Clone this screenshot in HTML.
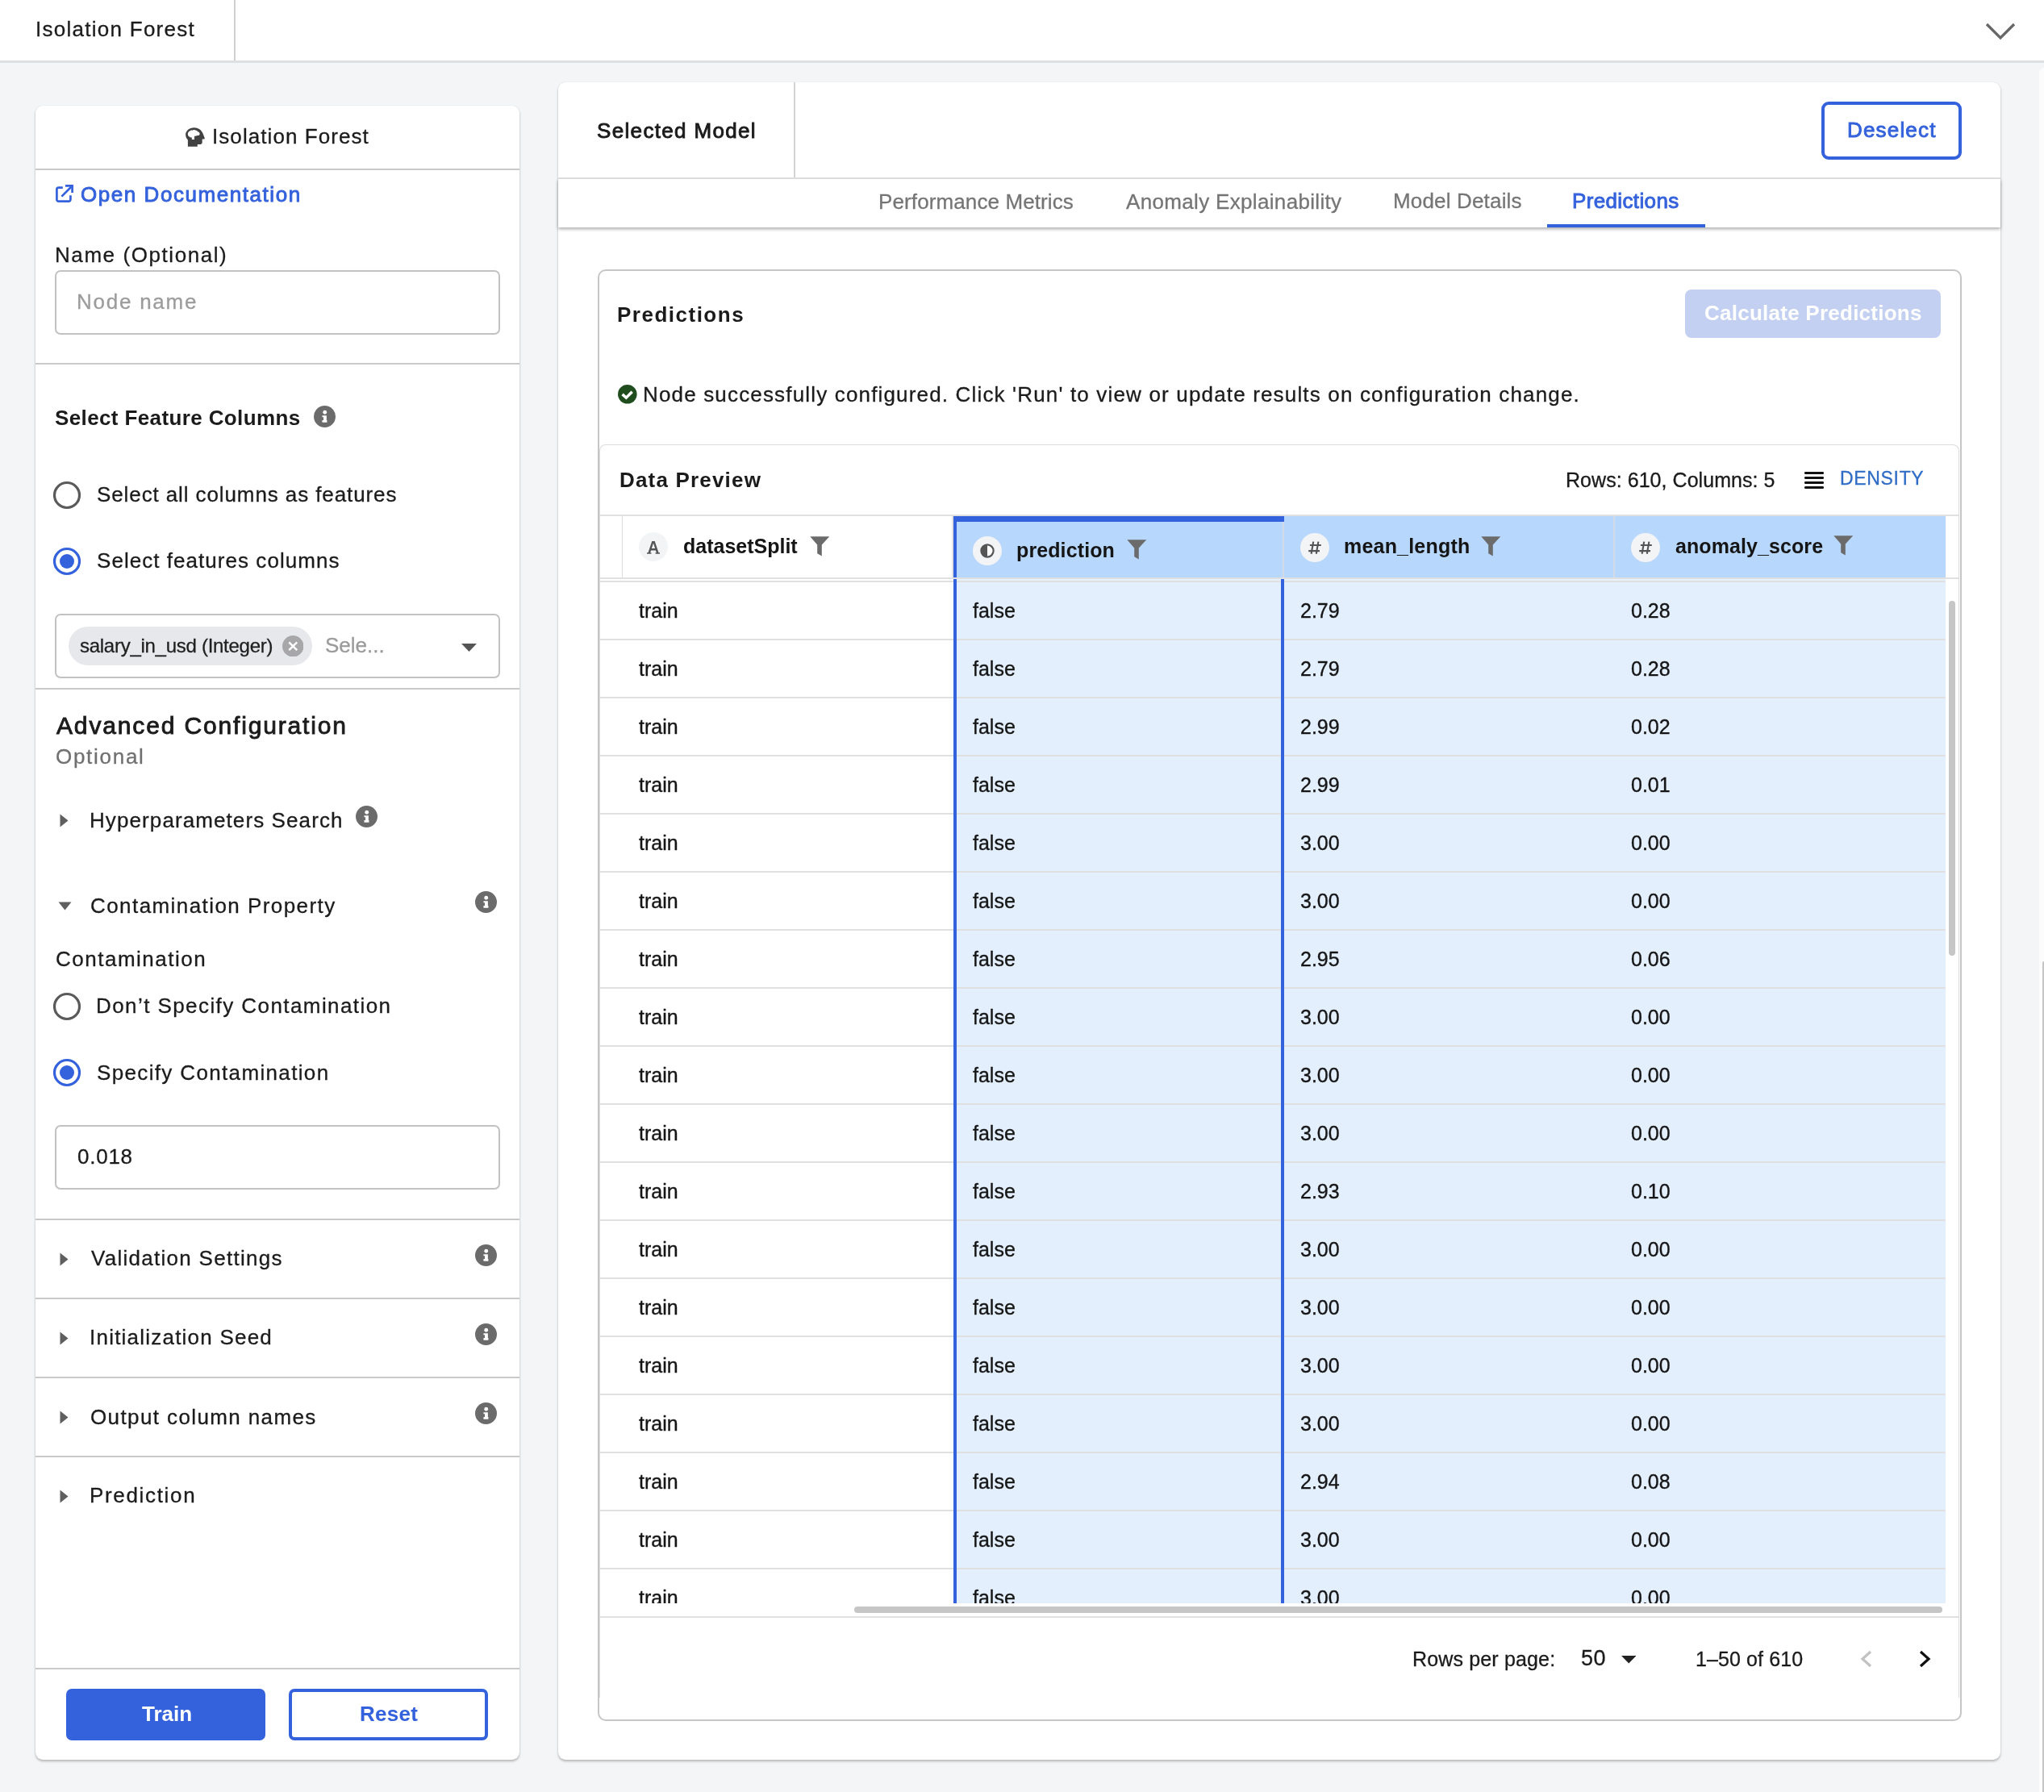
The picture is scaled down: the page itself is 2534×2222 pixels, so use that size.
<!DOCTYPE html>
<html><head><meta charset="utf-8"><title>Isolation Forest</title>
<style>
html,body{margin:0;padding:0;width:2534px;height:2222px;overflow:hidden;background:#f4f5f7}
body{position:relative;font-family:'Liberation Sans', sans-serif}
body div, body svg{position:absolute;box-sizing:border-box}
.t,.tb{white-space:pre;will-change:transform}
</style></head><body>
<div style="left:0px;top:0px;width:2534px;height:2222px;background:#f4f5f7"></div>
<div style="left:0px;top:0px;width:2534px;height:75px;background:#ffffff"></div>
<div style="left:0px;top:75px;width:2534px;height:3px;background:#dedfe1"></div>
<div style="left:290px;top:0px;width:2px;height:75px;background:#d0d0d0"></div>
<div class="t" id="top_title" style="left:43.84px;top:23.39px;font-size:26px;line-height:26px;font-weight:400;color:#1b1b1b;letter-spacing:1.267px;-webkit-text-stroke:0.3px currentColor;">Isolation Forest</div>
<svg style="left:2460px;top:26px;" width="40" height="26" viewBox="0 0 40 26"><polyline points="3,4 20,21 37,4" fill="none" stroke="#666" stroke-width="3.2"/></svg>
<div style="left:2528px;top:84px;width:6px;height:2138px;background:#fcfcfd;border-radius:8px 0 0 0"></div>
<div style="left:2532px;top:1192px;width:2px;height:1030px;background:#c4c4c4;border-radius:2px 0 0 0"></div>
<div style="left:44px;top:131px;width:600px;height:2051px;background:#fff;border-radius:9px;box-shadow:0 2px 3px rgba(0,0,0,0.26), 0 0 1px rgba(0,0,0,0.13)"></div>
<svg style="left:230px;top:158px;" width="24" height="24" viewBox="0 0 24 24"><path fill="#424242" fill-rule="evenodd" d="M10.6,0.2 C15.6,0.2 20,3.2 21.5,7.6 L23.7,12.9 C23.9,13.7 23.5,14.4 22.7,14.4 L20.7,14.4 L20.7,18.5 C20.7,19.8 19.7,20.9 18.4,20.9 L14.8,20.9 L14.8,23.8 L2.9,23.8 L2.9,15.5 C1.1,13.8 0.1,11.5 0.1,9.1 C0.1,4.1 4.8,0.2 10.6,0.2 Z M2.8,8.2 C2.8,6.5 3.8,5.2 5.3,4.6 C6,3.6 7.3,3.3 8.4,3.7 C9.3,3.0 11.0,2.9 12.0,3.5 C13.3,3.3 14.6,4.2 15.1,5.3 C16.6,5.5 17.8,6.8 17.6,8.2 C17.5,9.3 16.6,10.1 15.4,10.1 L14.3,10.1 C13.7,10.5 13.0,10.7 12.3,10.7 L11.0,10.8 L11.0,15.0 L7.8,15.0 L7.8,12.6 C6.5,12.6 5.2,12.0 4.4,11.2 C3.4,10.6 2.8,9.5 2.8,8.2 Z"/></svg>
<div class="t" id="card_title" style="left:262.94px;top:155.99px;font-size:26px;line-height:26px;font-weight:400;color:#1b1b1b;letter-spacing:1.067px;-webkit-text-stroke:0.3px currentColor;">Isolation Forest</div>
<div style="left:44px;top:209px;width:600px;height:2px;background:#c9c9c9"></div>
<svg style="left:68px;top:228px;" width="24" height="24" viewBox="0 0 24 24"><path d="M9.8,4.6 H4.6 A2.2,2.2 0 0 0 2.4,6.8 V19.4 A2.2,2.2 0 0 0 4.6,21.6 H17.2 A2.2,2.2 0 0 0 19.4,19.4 V14.2" fill="none" stroke="#3462dc" stroke-width="2.7"/><path d="M8.4,15.6 L20.2,3.8" stroke="#3462dc" stroke-width="2.7"/><path d="M13,2.4 H21.6 V11" fill="none" stroke="#3462dc" stroke-width="2.7"/></svg>
<div class="t" id="opendoc" style="left:99.74px;top:227.99px;font-size:26px;line-height:26px;font-weight:400;color:#3462dc;letter-spacing:1.553px;-webkit-text-stroke:0.9px currentColor;">Open Documentation</div>
<div class="t" id="name_lbl" style="left:68.44px;top:302.99px;font-size:26px;line-height:26px;font-weight:400;color:#1b1b1b;letter-spacing:1.571px;-webkit-text-stroke:0.3px currentColor;">Name (Optional)</div>
<div style="left:68px;top:335px;width:552px;height:80px;border:2px solid #c2c2c2;border-radius:7px;box-sizing:border-box;background:#fff"></div>
<div class="t" id="node_ph" style="left:95.34px;top:361.39px;font-size:26px;line-height:26px;font-weight:400;color:#9c9c9c;letter-spacing:1.750px;-webkit-text-stroke:0.3px currentColor;">Node name</div>
<div style="left:44px;top:450px;width:600px;height:2px;background:#c9c9c9"></div>
<div class="t" id="sfc" style="left:68.24px;top:504.99px;font-size:26px;line-height:26px;font-weight:700;color:#1b1b1b;letter-spacing:0.381px;">Select Feature Columns</div>
<svg style="left:388.7px;top:502.79999999999995px;" width="27" height="27" viewBox="0 0 24 24"><circle cx="12" cy="12" r="12" fill="#6b6b6b"/><circle cx="12.2" cy="7.3" r="2.15" fill="#fff"/><path d="M9.3,10.8 H14.1 V16.1 H14.6 V18.5 H9.3 V16.1 H10.7 V12.7 H9.3 Z" fill="#fff"/></svg>
<svg style="left:65.1px;top:595.8px;" width="36" height="36" viewBox="0 0 36 36"><circle cx="18" cy="18" r="15.5" fill="#fff" stroke="#5a5a5a" stroke-width="3.2"/></svg>
<div class="t" id="r1" style="left:120.44px;top:600.29px;font-size:26px;line-height:26px;font-weight:400;color:#1b1b1b;letter-spacing:0.897px;-webkit-text-stroke:0.3px currentColor;">Select all columns as features</div>
<svg style="left:65.1px;top:677.6px;" width="36" height="36" viewBox="0 0 36 36"><circle cx="18" cy="18" r="15.5" fill="#fff" stroke="#3462dc" stroke-width="3.2"/><circle cx="18" cy="18" r="9" fill="#3462dc"/></svg>
<div class="t" id="r2" style="left:120.44px;top:682.29px;font-size:26px;line-height:26px;font-weight:400;color:#1b1b1b;letter-spacing:1.045px;-webkit-text-stroke:0.3px currentColor;">Select features columns</div>
<div style="left:68px;top:761px;width:552px;height:80px;border:2px solid #c2c2c2;border-radius:7px;box-sizing:border-box;background:#fff"></div>
<div style="left:84.6px;top:777.3px;width:302.20000000000005px;height:47.30000000000007px;background:#e7e8eb;border-radius:24px"></div>
<div class="t" id="chip" style="left:98.56px;top:788.98px;font-size:24px;line-height:24px;font-weight:400;color:#1f1f1f;letter-spacing:-0.273px;-webkit-text-stroke:0.3px currentColor;">salary_in_usd (Integer)</div>
<svg style="left:349.8px;top:787.8px;" width="26.5" height="26.5" viewBox="0 0 26.5 26.5"><circle cx="13.25" cy="13.25" r="13.25" fill="#a7a7a9"/><path d="M8.3,8.3 L18.2,18.2 M18.2,8.3 L8.3,18.2" stroke="#fff" stroke-width="2.4"/></svg>
<div class="t" id="sele" style="left:403.44px;top:786.99px;font-size:26px;line-height:26px;font-weight:400;color:#9b9b9b;letter-spacing:0.000px;-webkit-text-stroke:0.3px currentColor;">Sele...</div>
<svg style="left:571.5px;top:797.5px;" width="19" height="10" viewBox="0 0 19 10"><path d="M0,0 H19 L9.5,10 Z" fill="#555"/></svg>
<div style="left:44px;top:853px;width:600px;height:2px;background:#c9c9c9"></div>
<div class="t" id="advcfg" style="left:69.80px;top:884.71px;font-size:30px;line-height:30px;font-weight:400;color:#1b1b1b;letter-spacing:1.848px;-webkit-text-stroke:0.9px currentColor;">Advanced Configuration</div>
<div class="t" id="optional" style="left:68.84px;top:924.79px;font-size:26px;line-height:26px;font-weight:400;color:#707070;letter-spacing:1.714px;-webkit-text-stroke:0.3px currentColor;">Optional</div>
<svg style="left:74px;top:1008.5px;" width="11" height="17" viewBox="0 0 11 17"><path d="M0.5,0.5 L10.5,8.5 L0.5,16.5 Z" fill="#5f5f5f"/></svg>
<div class="t" id="hyp" style="left:111.44px;top:1003.59px;font-size:26px;line-height:26px;font-weight:400;color:#1b1b1b;letter-spacing:1.095px;-webkit-text-stroke:0.3px currentColor;">Hyperparameters Search</div>
<svg style="left:441.2px;top:999.0px;" width="27" height="27" viewBox="0 0 24 24"><circle cx="12" cy="12" r="12" fill="#6b6b6b"/><circle cx="12.2" cy="7.3" r="2.15" fill="#fff"/><path d="M9.3,10.8 H14.1 V16.1 H14.6 V18.5 H9.3 V16.1 H10.7 V12.7 H9.3 Z" fill="#fff"/></svg>
<svg style="left:71.5px;top:1118px;" width="17" height="11" viewBox="0 0 17 11"><path d="M0.5,0.5 H16.5 L8.5,10.5 Z" fill="#5f5f5f"/></svg>
<div class="t" id="cprop" style="left:112.44px;top:1109.99px;font-size:26px;line-height:26px;font-weight:400;color:#1b1b1b;letter-spacing:1.429px;-webkit-text-stroke:0.3px currentColor;">Contamination Property</div>
<svg style="left:588.5px;top:1105.0px;" width="27" height="27" viewBox="0 0 24 24"><circle cx="12" cy="12" r="12" fill="#6b6b6b"/><circle cx="12.2" cy="7.3" r="2.15" fill="#fff"/><path d="M9.3,10.8 H14.1 V16.1 H14.6 V18.5 H9.3 V16.1 H10.7 V12.7 H9.3 Z" fill="#fff"/></svg>
<div class="t" id="contam" style="left:68.84px;top:1176.29px;font-size:26px;line-height:26px;font-weight:400;color:#1b1b1b;letter-spacing:1.500px;-webkit-text-stroke:0.3px currentColor;">Contamination</div>
<svg style="left:65.1px;top:1230.3px;" width="36" height="36" viewBox="0 0 36 36"><circle cx="18" cy="18" r="15.5" fill="#fff" stroke="#5a5a5a" stroke-width="3.2"/></svg>
<div class="t" id="dsc" style="left:119.44px;top:1233.79px;font-size:26px;line-height:26px;font-weight:400;color:#1b1b1b;letter-spacing:1.423px;-webkit-text-stroke:0.3px currentColor;">Don’t Specify Contamination</div>
<svg style="left:65.1px;top:1312px;" width="36" height="36" viewBox="0 0 36 36"><circle cx="18" cy="18" r="15.5" fill="#fff" stroke="#3462dc" stroke-width="3.2"/><circle cx="18" cy="18" r="9" fill="#3462dc"/></svg>
<div class="t" id="sc" style="left:120.44px;top:1316.69px;font-size:26px;line-height:26px;font-weight:400;color:#1b1b1b;letter-spacing:1.350px;-webkit-text-stroke:0.3px currentColor;">Specify Contamination</div>
<div style="left:68px;top:1395px;width:552px;height:80px;border:2px solid #c2c2c2;border-radius:7px;box-sizing:border-box;background:#fff"></div>
<div class="t" id="val018" style="left:96.34px;top:1420.99px;font-size:26px;line-height:26px;font-weight:400;color:#1b1b1b;letter-spacing:0.750px;-webkit-text-stroke:0.3px currentColor;">0.018</div>
<div style="left:44px;top:1511px;width:600px;height:2px;background:#c9c9c9"></div>
<svg style="left:74px;top:1552.5px;" width="11" height="17" viewBox="0 0 11 17"><path d="M0.5,0.5 L10.5,8.5 L0.5,16.5 Z" fill="#5f5f5f"/></svg>
<div class="t" id="vs" style="left:113.44px;top:1546.99px;font-size:26px;line-height:26px;font-weight:400;color:#1b1b1b;letter-spacing:1.278px;-webkit-text-stroke:0.3px currentColor;">Validation Settings</div>
<svg style="left:588.5px;top:1542.9px;" width="27" height="27" viewBox="0 0 24 24"><circle cx="12" cy="12" r="12" fill="#6b6b6b"/><circle cx="12.2" cy="7.3" r="2.15" fill="#fff"/><path d="M9.3,10.8 H14.1 V16.1 H14.6 V18.5 H9.3 V16.1 H10.7 V12.7 H9.3 Z" fill="#fff"/></svg>
<svg style="left:74px;top:1650.5px;" width="11" height="17" viewBox="0 0 11 17"><path d="M0.5,0.5 L10.5,8.5 L0.5,16.5 Z" fill="#5f5f5f"/></svg>
<div class="t" id="is" style="left:111.44px;top:1644.99px;font-size:26px;line-height:26px;font-weight:400;color:#1b1b1b;letter-spacing:1.222px;-webkit-text-stroke:0.3px currentColor;">Initialization Seed</div>
<svg style="left:588.5px;top:1641.0px;" width="27" height="27" viewBox="0 0 24 24"><circle cx="12" cy="12" r="12" fill="#6b6b6b"/><circle cx="12.2" cy="7.3" r="2.15" fill="#fff"/><path d="M9.3,10.8 H14.1 V16.1 H14.6 V18.5 H9.3 V16.1 H10.7 V12.7 H9.3 Z" fill="#fff"/></svg>
<svg style="left:74px;top:1749px;" width="11" height="17" viewBox="0 0 11 17"><path d="M0.5,0.5 L10.5,8.5 L0.5,16.5 Z" fill="#5f5f5f"/></svg>
<div class="t" id="ocn" style="left:112.44px;top:1743.59px;font-size:26px;line-height:26px;font-weight:400;color:#1b1b1b;letter-spacing:1.389px;-webkit-text-stroke:0.3px currentColor;">Output column names</div>
<svg style="left:588.5px;top:1739.0px;" width="27" height="27" viewBox="0 0 24 24"><circle cx="12" cy="12" r="12" fill="#6b6b6b"/><circle cx="12.2" cy="7.3" r="2.15" fill="#fff"/><path d="M9.3,10.8 H14.1 V16.1 H14.6 V18.5 H9.3 V16.1 H10.7 V12.7 H9.3 Z" fill="#fff"/></svg>
<div style="left:44px;top:1609px;width:600px;height:2px;background:#c9c9c9"></div>
<div style="left:44px;top:1707px;width:600px;height:2px;background:#c9c9c9"></div>
<div style="left:44px;top:1805px;width:600px;height:2px;background:#c9c9c9"></div>
<svg style="left:74px;top:1847px;" width="11" height="17" viewBox="0 0 11 17"><path d="M0.5,0.5 L10.5,8.5 L0.5,16.5 Z" fill="#5f5f5f"/></svg>
<div class="t" id="pred" style="left:111.44px;top:1841.39px;font-size:26px;line-height:26px;font-weight:400;color:#1b1b1b;letter-spacing:1.667px;-webkit-text-stroke:0.3px currentColor;">Prediction</div>
<div style="left:44px;top:2068px;width:600px;height:2px;background:#c9c9c9"></div>
<div style="left:82.3px;top:2094.3px;width:247.09999999999997px;height:63.69999999999982px;background:#3462dc;border-radius:7px"></div>
<div class="t" id="train" style="left:176.44px;top:2111.69px;font-size:26px;line-height:26px;font-weight:700;color:#ffffff;letter-spacing:0.000px;">Train</div>
<div style="left:358.4px;top:2094.3px;width:247.0px;height:63.69999999999982px;border:4px solid #3462dc;border-radius:7px;box-sizing:border-box;background:#fff"></div>
<div class="t" id="reset" style="left:445.64px;top:2111.69px;font-size:26px;line-height:26px;font-weight:700;color:#3462dc;letter-spacing:0.250px;">Reset</div>
<div style="left:692px;top:102px;width:1788px;height:2080px;background:#fff;border-radius:9px;box-shadow:0 2px 3px rgba(0,0,0,0.26), 0 0 1px rgba(0,0,0,0.13)"></div>
<div class="t" id="selmodel" style="left:739.74px;top:148.69px;font-size:26px;line-height:26px;font-weight:400;color:#1b1b1b;letter-spacing:1.338px;-webkit-text-stroke:0.9px currentColor;">Selected Model</div>
<div style="left:984px;top:102px;width:2px;height:119px;background:#d4d4d4"></div>
<div style="left:692px;top:220px;width:1788px;height:2px;background:#e3e3e3"></div>
<div style="left:2258px;top:126px;width:174px;height:72px;border:4px solid #3462dc;border-radius:9px;box-sizing:border-box"></div>
<div class="t" id="deselect" style="left:2289.84px;top:147.79px;font-size:26px;line-height:26px;font-weight:400;color:#3462dc;letter-spacing:1.171px;-webkit-text-stroke:0.9px currentColor;">Deselect</div>
<div style="left:692px;top:222px;width:1788px;height:60px;background:#fff;box-shadow:0 2px 4px rgba(0,0,0,0.34)"></div>
<div class="t" id="tab1" style="left:1089.24px;top:236.69px;font-size:26px;line-height:26px;font-weight:400;color:#757575;letter-spacing:0.111px;-webkit-text-stroke:0.3px currentColor;">Performance Metrics</div>
<div class="t" id="tab2" style="left:1396.04px;top:236.69px;font-size:26px;line-height:26px;font-weight:400;color:#757575;letter-spacing:0.333px;-webkit-text-stroke:0.3px currentColor;">Anomaly Explainability</div>
<div class="t" id="tab3" style="left:1727.04px;top:236.49px;font-size:26px;line-height:26px;font-weight:400;color:#757575;letter-spacing:0.167px;-webkit-text-stroke:0.3px currentColor;">Model Details</div>
<div class="t" id="tab4" style="left:1949.44px;top:236.49px;font-size:26px;line-height:26px;font-weight:400;color:#3462dc;letter-spacing:0.360px;-webkit-text-stroke:0.9px currentColor;">Predictions</div>
<div style="left:1918px;top:277.5px;width:196px;height:4.5px;background:#3462dc"></div>
<div style="left:741px;top:334px;width:1691px;height:1800px;border:2px solid #c6c6c6;border-radius:10px;box-sizing:border-box;background:#fff"></div>
<div class="t" id="predtitle" style="left:765.44px;top:376.69px;font-size:26px;line-height:26px;font-weight:700;color:#1b1b1b;letter-spacing:1.500px;">Predictions</div>
<div style="left:2089px;top:359px;width:316.5px;height:59.60000000000002px;background:#c3d0f1;border-radius:8px"></div>
<div class="t" id="calc" style="left:2113.14px;top:375.29px;font-size:26px;line-height:26px;font-weight:700;color:#ffffff;letter-spacing:0.250px;">Calculate Predictions</div>
<svg style="left:766.3px;top:477px;" width="23.6" height="23.6" viewBox="0 0 23.6 23.6"><circle cx="11.8" cy="11.8" r="11.8" fill="#1f4d1d"/><path d="M5.6,11.9 L10.3,16.2 L17.7,8.8" fill="none" stroke="#fff" stroke-width="3.5"/></svg>
<div class="t" id="msg" style="left:797.44px;top:475.59px;font-size:26px;line-height:26px;font-weight:400;color:#1b1b1b;letter-spacing:1.165px;-webkit-text-stroke:0.3px currentColor;">Node successfully configured. Click &#x27;Run&#x27; to view or update results on configuration change.</div>
<div style="left:743px;top:551px;width:1686px;height:1554px;border:1px solid #dcdcdc;border-bottom:none;border-radius:8px 8px 0 0;box-sizing:border-box;background:#fff"></div>
<div class="t" id="dp" style="left:767.74px;top:581.79px;font-size:26px;line-height:26px;font-weight:700;color:#1b1b1b;letter-spacing:1.182px;">Data Preview</div>
<div class="t" id="rowscols" style="left:1940.50px;top:582.84px;font-size:25px;line-height:25px;font-weight:400;color:#1a1a1a;letter-spacing:0.050px;-webkit-text-stroke:0.3px currentColor;">Rows: 610, Columns: 5</div>
<svg style="left:2236px;top:584px;" width="26" height="22" viewBox="0 0 26 22"><rect x="1" y="1" width="24" height="3" rx="1.2" fill="#111"/><rect x="1" y="7" width="24" height="3" rx="1.2" fill="#111"/><rect x="1" y="13" width="24" height="3" rx="1.2" fill="#111"/><rect x="1" y="19" width="24" height="3" rx="1.2" fill="#111"/></svg>
<div class="t" id="density" style="left:2281.22px;top:582.13px;font-size:23px;line-height:23px;font-weight:400;color:#2f6cc6;letter-spacing:0.667px;-webkit-text-stroke:0.3px currentColor;">DENSITY</div>
<div style="left:744px;top:638px;width:1684px;height:2px;background:#e0e0e0"></div>
<div style="left:1182px;top:640px;width:1230px;height:76px;background:#b8d7fc"></div>
<div style="left:770.5px;top:640px;width:1.0px;height:76px;background:#dcdcdc"></div>
<div style="left:1180px;top:640px;width:2px;height:76px;background:#e2e2e2"></div>
<div style="left:1590px;top:646px;width:2px;height:70px;background:#d2dbe6"></div>
<div style="left:2000px;top:640px;width:2px;height:76px;background:#d2dbe6"></div>
<div style="left:1182px;top:640px;width:410px;height:6.5px;background:#3462dc"></div>
<div style="left:1182px;top:640px;width:4px;height:76px;background:#3462dc"></div>
<div style="left:744px;top:716px;width:1684px;height:2px;background:#e0e0e0"></div>
<div style="left:1186px;top:718px;width:1226px;height:2px;background:#e6f1fd"></div>
<div style="left:744px;top:720px;width:1668px;height:2px;background:#e0e0e0"></div>
<svg style="left:792px;top:660px;" width="36" height="36" viewBox="0 0 36 36"><circle cx="18" cy="18" r="18" fill="#f3f4f6"/><path fill="#555" fill-rule="evenodd" d="M16.3,10.9 H19.7 L24.5,25.2 H26 V26.8 H20.6 V25.2 H21.8 L20.9,22.4 H15.1 L14.2,25.2 H15.4 V26.8 H10 V25.2 H11.5 Z M15.9,19.9 H20.1 L18,13.6 Z"/></svg>
<div class="t" id="h1" style="left:847.10px;top:664.84px;font-size:25px;line-height:25px;font-weight:700;color:#151515;letter-spacing:-0.000px;">datasetSplit</div>
<svg style="left:1004px;top:664.5px;" width="25" height="25" viewBox="0 0 25 25"><path d="M0.3,0.3 H24.3 L14.8,10.4 V24.4 L9.2,21.3 V10.4 Z" fill="#6b6b6b"/></svg>
<svg style="left:1206px;top:665px;" width="36" height="36" viewBox="0 0 36 36"><circle cx="18" cy="18" r="18" fill="#f3f4f6"/><circle cx="18" cy="18" r="7.6" fill="#fff" stroke="#555" stroke-width="2.2"/><path d="M18,10.4 A7.6,7.6 0 0 0 18,25.6 Z" fill="#555"/></svg>
<div class="t" id="h2" style="left:1260.20px;top:669.84px;font-size:25px;line-height:25px;font-weight:700;color:#151515;letter-spacing:0.111px;">prediction</div>
<svg style="left:1397px;top:669px;" width="25" height="25" viewBox="0 0 25 25"><path d="M0.3,0.3 H24.3 L14.8,10.4 V24.4 L9.2,21.3 V10.4 Z" fill="#6b6b6b"/></svg>
<svg style="left:1612px;top:661px;" width="36" height="36" viewBox="0 0 36 36"><circle cx="18" cy="18" r="18" fill="#f3f4f6"/><path d="M16.2,10.6 L13.6,25.8 M22.4,10.6 L19.8,25.8 M11.9,15 H25.8 M10.2,22.1 H24" stroke="#555" stroke-width="2.1" fill="none"/></svg>
<div class="t" id="h3" style="left:1666.00px;top:664.84px;font-size:25px;line-height:25px;font-weight:700;color:#151515;letter-spacing:0.200px;">mean_length</div>
<svg style="left:1835.6px;top:664.5px;" width="25" height="25" viewBox="0 0 25 25"><path d="M0.3,0.3 H24.3 L14.8,10.4 V24.4 L9.2,21.3 V10.4 Z" fill="#6b6b6b"/></svg>
<svg style="left:2022px;top:661px;" width="36" height="36" viewBox="0 0 36 36"><circle cx="18" cy="18" r="18" fill="#f3f4f6"/><path d="M16.2,10.6 L13.6,25.8 M22.4,10.6 L19.8,25.8 M11.9,15 H25.8 M10.2,22.1 H24" stroke="#555" stroke-width="2.1" fill="none"/></svg>
<div class="t" id="h4" style="left:2076.50px;top:664.54px;font-size:25px;line-height:25px;font-weight:700;color:#151515;letter-spacing:0.083px;">anomaly_score</div>
<svg style="left:2273px;top:664px;" width="25" height="25" viewBox="0 0 25 25"><path d="M0.3,0.3 H24.3 L14.8,10.4 V24.4 L9.2,21.3 V10.4 Z" fill="#6b6b6b"/></svg>
<div style="left:744px;top:722px;width:1668px;height:1266px;overflow:hidden"><div style="left:438px;top:0;width:1230px;height:1266px;background:#e4effe"></div><div style="left:0;top:70px;width:1668px;height:2px;background:#e0e0e0"></div><div class="tb" style="left:47.9px;top:23.14px;font-size:25px;line-height:25px;color:#151515;-webkit-text-stroke:0.35px currentColor">train</div><div class="tb" style="left:462.0px;top:23.14px;font-size:25px;line-height:25px;color:#151515;-webkit-text-stroke:0.35px currentColor">false</div><div class="tb" style="left:868.0px;top:23.14px;font-size:25px;line-height:25px;color:#151515;-webkit-text-stroke:0.35px currentColor">2.79</div><div class="tb" style="left:1277.8px;top:23.14px;font-size:25px;line-height:25px;color:#151515;-webkit-text-stroke:0.35px currentColor">0.28</div><div style="left:0;top:142px;width:1668px;height:2px;background:#e0e0e0"></div><div class="tb" style="left:47.9px;top:95.14px;font-size:25px;line-height:25px;color:#151515;-webkit-text-stroke:0.35px currentColor">train</div><div class="tb" style="left:462.0px;top:95.14px;font-size:25px;line-height:25px;color:#151515;-webkit-text-stroke:0.35px currentColor">false</div><div class="tb" style="left:868.0px;top:95.14px;font-size:25px;line-height:25px;color:#151515;-webkit-text-stroke:0.35px currentColor">2.79</div><div class="tb" style="left:1277.8px;top:95.14px;font-size:25px;line-height:25px;color:#151515;-webkit-text-stroke:0.35px currentColor">0.28</div><div style="left:0;top:214px;width:1668px;height:2px;background:#e0e0e0"></div><div class="tb" style="left:47.9px;top:167.14px;font-size:25px;line-height:25px;color:#151515;-webkit-text-stroke:0.35px currentColor">train</div><div class="tb" style="left:462.0px;top:167.14px;font-size:25px;line-height:25px;color:#151515;-webkit-text-stroke:0.35px currentColor">false</div><div class="tb" style="left:868.0px;top:167.14px;font-size:25px;line-height:25px;color:#151515;-webkit-text-stroke:0.35px currentColor">2.99</div><div class="tb" style="left:1277.8px;top:167.14px;font-size:25px;line-height:25px;color:#151515;-webkit-text-stroke:0.35px currentColor">0.02</div><div style="left:0;top:286px;width:1668px;height:2px;background:#e0e0e0"></div><div class="tb" style="left:47.9px;top:239.14px;font-size:25px;line-height:25px;color:#151515;-webkit-text-stroke:0.35px currentColor">train</div><div class="tb" style="left:462.0px;top:239.14px;font-size:25px;line-height:25px;color:#151515;-webkit-text-stroke:0.35px currentColor">false</div><div class="tb" style="left:868.0px;top:239.14px;font-size:25px;line-height:25px;color:#151515;-webkit-text-stroke:0.35px currentColor">2.99</div><div class="tb" style="left:1277.8px;top:239.14px;font-size:25px;line-height:25px;color:#151515;-webkit-text-stroke:0.35px currentColor">0.01</div><div style="left:0;top:358px;width:1668px;height:2px;background:#e0e0e0"></div><div class="tb" style="left:47.9px;top:311.14px;font-size:25px;line-height:25px;color:#151515;-webkit-text-stroke:0.35px currentColor">train</div><div class="tb" style="left:462.0px;top:311.14px;font-size:25px;line-height:25px;color:#151515;-webkit-text-stroke:0.35px currentColor">false</div><div class="tb" style="left:868.0px;top:311.14px;font-size:25px;line-height:25px;color:#151515;-webkit-text-stroke:0.35px currentColor">3.00</div><div class="tb" style="left:1277.8px;top:311.14px;font-size:25px;line-height:25px;color:#151515;-webkit-text-stroke:0.35px currentColor">0.00</div><div style="left:0;top:430px;width:1668px;height:2px;background:#e0e0e0"></div><div class="tb" style="left:47.9px;top:383.14px;font-size:25px;line-height:25px;color:#151515;-webkit-text-stroke:0.35px currentColor">train</div><div class="tb" style="left:462.0px;top:383.14px;font-size:25px;line-height:25px;color:#151515;-webkit-text-stroke:0.35px currentColor">false</div><div class="tb" style="left:868.0px;top:383.14px;font-size:25px;line-height:25px;color:#151515;-webkit-text-stroke:0.35px currentColor">3.00</div><div class="tb" style="left:1277.8px;top:383.14px;font-size:25px;line-height:25px;color:#151515;-webkit-text-stroke:0.35px currentColor">0.00</div><div style="left:0;top:502px;width:1668px;height:2px;background:#e0e0e0"></div><div class="tb" style="left:47.9px;top:455.14px;font-size:25px;line-height:25px;color:#151515;-webkit-text-stroke:0.35px currentColor">train</div><div class="tb" style="left:462.0px;top:455.14px;font-size:25px;line-height:25px;color:#151515;-webkit-text-stroke:0.35px currentColor">false</div><div class="tb" style="left:868.0px;top:455.14px;font-size:25px;line-height:25px;color:#151515;-webkit-text-stroke:0.35px currentColor">2.95</div><div class="tb" style="left:1277.8px;top:455.14px;font-size:25px;line-height:25px;color:#151515;-webkit-text-stroke:0.35px currentColor">0.06</div><div style="left:0;top:574px;width:1668px;height:2px;background:#e0e0e0"></div><div class="tb" style="left:47.9px;top:527.14px;font-size:25px;line-height:25px;color:#151515;-webkit-text-stroke:0.35px currentColor">train</div><div class="tb" style="left:462.0px;top:527.14px;font-size:25px;line-height:25px;color:#151515;-webkit-text-stroke:0.35px currentColor">false</div><div class="tb" style="left:868.0px;top:527.14px;font-size:25px;line-height:25px;color:#151515;-webkit-text-stroke:0.35px currentColor">3.00</div><div class="tb" style="left:1277.8px;top:527.14px;font-size:25px;line-height:25px;color:#151515;-webkit-text-stroke:0.35px currentColor">0.00</div><div style="left:0;top:646px;width:1668px;height:2px;background:#e0e0e0"></div><div class="tb" style="left:47.9px;top:599.14px;font-size:25px;line-height:25px;color:#151515;-webkit-text-stroke:0.35px currentColor">train</div><div class="tb" style="left:462.0px;top:599.14px;font-size:25px;line-height:25px;color:#151515;-webkit-text-stroke:0.35px currentColor">false</div><div class="tb" style="left:868.0px;top:599.14px;font-size:25px;line-height:25px;color:#151515;-webkit-text-stroke:0.35px currentColor">3.00</div><div class="tb" style="left:1277.8px;top:599.14px;font-size:25px;line-height:25px;color:#151515;-webkit-text-stroke:0.35px currentColor">0.00</div><div style="left:0;top:718px;width:1668px;height:2px;background:#e0e0e0"></div><div class="tb" style="left:47.9px;top:671.14px;font-size:25px;line-height:25px;color:#151515;-webkit-text-stroke:0.35px currentColor">train</div><div class="tb" style="left:462.0px;top:671.14px;font-size:25px;line-height:25px;color:#151515;-webkit-text-stroke:0.35px currentColor">false</div><div class="tb" style="left:868.0px;top:671.14px;font-size:25px;line-height:25px;color:#151515;-webkit-text-stroke:0.35px currentColor">3.00</div><div class="tb" style="left:1277.8px;top:671.14px;font-size:25px;line-height:25px;color:#151515;-webkit-text-stroke:0.35px currentColor">0.00</div><div style="left:0;top:790px;width:1668px;height:2px;background:#e0e0e0"></div><div class="tb" style="left:47.9px;top:743.14px;font-size:25px;line-height:25px;color:#151515;-webkit-text-stroke:0.35px currentColor">train</div><div class="tb" style="left:462.0px;top:743.14px;font-size:25px;line-height:25px;color:#151515;-webkit-text-stroke:0.35px currentColor">false</div><div class="tb" style="left:868.0px;top:743.14px;font-size:25px;line-height:25px;color:#151515;-webkit-text-stroke:0.35px currentColor">2.93</div><div class="tb" style="left:1277.8px;top:743.14px;font-size:25px;line-height:25px;color:#151515;-webkit-text-stroke:0.35px currentColor">0.10</div><div style="left:0;top:862px;width:1668px;height:2px;background:#e0e0e0"></div><div class="tb" style="left:47.9px;top:815.14px;font-size:25px;line-height:25px;color:#151515;-webkit-text-stroke:0.35px currentColor">train</div><div class="tb" style="left:462.0px;top:815.14px;font-size:25px;line-height:25px;color:#151515;-webkit-text-stroke:0.35px currentColor">false</div><div class="tb" style="left:868.0px;top:815.14px;font-size:25px;line-height:25px;color:#151515;-webkit-text-stroke:0.35px currentColor">3.00</div><div class="tb" style="left:1277.8px;top:815.14px;font-size:25px;line-height:25px;color:#151515;-webkit-text-stroke:0.35px currentColor">0.00</div><div style="left:0;top:934px;width:1668px;height:2px;background:#e0e0e0"></div><div class="tb" style="left:47.9px;top:887.14px;font-size:25px;line-height:25px;color:#151515;-webkit-text-stroke:0.35px currentColor">train</div><div class="tb" style="left:462.0px;top:887.14px;font-size:25px;line-height:25px;color:#151515;-webkit-text-stroke:0.35px currentColor">false</div><div class="tb" style="left:868.0px;top:887.14px;font-size:25px;line-height:25px;color:#151515;-webkit-text-stroke:0.35px currentColor">3.00</div><div class="tb" style="left:1277.8px;top:887.14px;font-size:25px;line-height:25px;color:#151515;-webkit-text-stroke:0.35px currentColor">0.00</div><div style="left:0;top:1006px;width:1668px;height:2px;background:#e0e0e0"></div><div class="tb" style="left:47.9px;top:959.14px;font-size:25px;line-height:25px;color:#151515;-webkit-text-stroke:0.35px currentColor">train</div><div class="tb" style="left:462.0px;top:959.14px;font-size:25px;line-height:25px;color:#151515;-webkit-text-stroke:0.35px currentColor">false</div><div class="tb" style="left:868.0px;top:959.14px;font-size:25px;line-height:25px;color:#151515;-webkit-text-stroke:0.35px currentColor">3.00</div><div class="tb" style="left:1277.8px;top:959.14px;font-size:25px;line-height:25px;color:#151515;-webkit-text-stroke:0.35px currentColor">0.00</div><div style="left:0;top:1078px;width:1668px;height:2px;background:#e0e0e0"></div><div class="tb" style="left:47.9px;top:1031.14px;font-size:25px;line-height:25px;color:#151515;-webkit-text-stroke:0.35px currentColor">train</div><div class="tb" style="left:462.0px;top:1031.14px;font-size:25px;line-height:25px;color:#151515;-webkit-text-stroke:0.35px currentColor">false</div><div class="tb" style="left:868.0px;top:1031.14px;font-size:25px;line-height:25px;color:#151515;-webkit-text-stroke:0.35px currentColor">3.00</div><div class="tb" style="left:1277.8px;top:1031.14px;font-size:25px;line-height:25px;color:#151515;-webkit-text-stroke:0.35px currentColor">0.00</div><div style="left:0;top:1150px;width:1668px;height:2px;background:#e0e0e0"></div><div class="tb" style="left:47.9px;top:1103.14px;font-size:25px;line-height:25px;color:#151515;-webkit-text-stroke:0.35px currentColor">train</div><div class="tb" style="left:462.0px;top:1103.14px;font-size:25px;line-height:25px;color:#151515;-webkit-text-stroke:0.35px currentColor">false</div><div class="tb" style="left:868.0px;top:1103.14px;font-size:25px;line-height:25px;color:#151515;-webkit-text-stroke:0.35px currentColor">2.94</div><div class="tb" style="left:1277.8px;top:1103.14px;font-size:25px;line-height:25px;color:#151515;-webkit-text-stroke:0.35px currentColor">0.08</div><div style="left:0;top:1222px;width:1668px;height:2px;background:#e0e0e0"></div><div class="tb" style="left:47.9px;top:1175.14px;font-size:25px;line-height:25px;color:#151515;-webkit-text-stroke:0.35px currentColor">train</div><div class="tb" style="left:462.0px;top:1175.14px;font-size:25px;line-height:25px;color:#151515;-webkit-text-stroke:0.35px currentColor">false</div><div class="tb" style="left:868.0px;top:1175.14px;font-size:25px;line-height:25px;color:#151515;-webkit-text-stroke:0.35px currentColor">3.00</div><div class="tb" style="left:1277.8px;top:1175.14px;font-size:25px;line-height:25px;color:#151515;-webkit-text-stroke:0.35px currentColor">0.00</div><div style="left:0;top:1294px;width:1668px;height:2px;background:#e0e0e0"></div><div class="tb" style="left:47.9px;top:1247.14px;font-size:25px;line-height:25px;color:#151515;-webkit-text-stroke:0.35px currentColor">train</div><div class="tb" style="left:462.0px;top:1247.14px;font-size:25px;line-height:25px;color:#151515;-webkit-text-stroke:0.35px currentColor">false</div><div class="tb" style="left:868.0px;top:1247.14px;font-size:25px;line-height:25px;color:#151515;-webkit-text-stroke:0.35px currentColor">3.00</div><div class="tb" style="left:1277.8px;top:1247.14px;font-size:25px;line-height:25px;color:#151515;-webkit-text-stroke:0.35px currentColor">0.00</div><div style="left:438px;top:0;width:4px;height:1266px;background:#3462dc"></div><div style="left:844px;top:0;width:4px;height:1266px;background:#3462dc"></div></div>
<div style="left:1182px;top:718px;width:4px;height:4px;background:#3462dc"></div>
<div style="left:1588px;top:718px;width:4px;height:4px;background:#3462dc"></div>
<div style="left:2416px;top:745px;width:8px;height:440px;background:#c6c6c6;border-radius:4px"></div>
<div style="left:1058.7px;top:1992px;width:1349.3px;height:8px;background:#c6c6c6;border-radius:4px"></div>
<div style="left:744px;top:2004px;width:1684px;height:2px;background:#e0e0e0"></div>
<div class="t" id="rpp" style="left:1751.10px;top:2044.84px;font-size:25px;line-height:25px;font-weight:400;color:#1a1a1a;letter-spacing:0.154px;-webkit-text-stroke:0.3px currentColor;">Rows per page:</div>
<div class="t" id="fifty" style="left:1959.90px;top:2043.14px;font-size:27px;line-height:27px;font-weight:400;color:#1a1a1a;letter-spacing:0.500px;-webkit-text-stroke:0.3px currentColor;">50</div>
<svg style="left:2009.5px;top:2053px;" width="18.5" height="9.5" viewBox="0 0 18.5 9.5"><path d="M0,0 H18.5 L9.25,9.5 Z" fill="#222"/></svg>
<div class="t" id="of610" style="left:2102.30px;top:2044.84px;font-size:25px;line-height:25px;font-weight:400;color:#1a1a1a;letter-spacing:0.100px;-webkit-text-stroke:0.3px currentColor;">1–50 of 610</div>
<svg style="left:2303px;top:2046px;" width="20" height="22" viewBox="0 0 20 22"><polyline points="16,2 6,11 16,20" fill="none" stroke="#c2c2c2" stroke-width="3.2"/></svg>
<svg style="left:2377px;top:2046px;" width="20" height="22" viewBox="0 0 20 22"><polyline points="4,2 14,11 4,20" fill="none" stroke="#111" stroke-width="3.2"/></svg>
</body></html>
